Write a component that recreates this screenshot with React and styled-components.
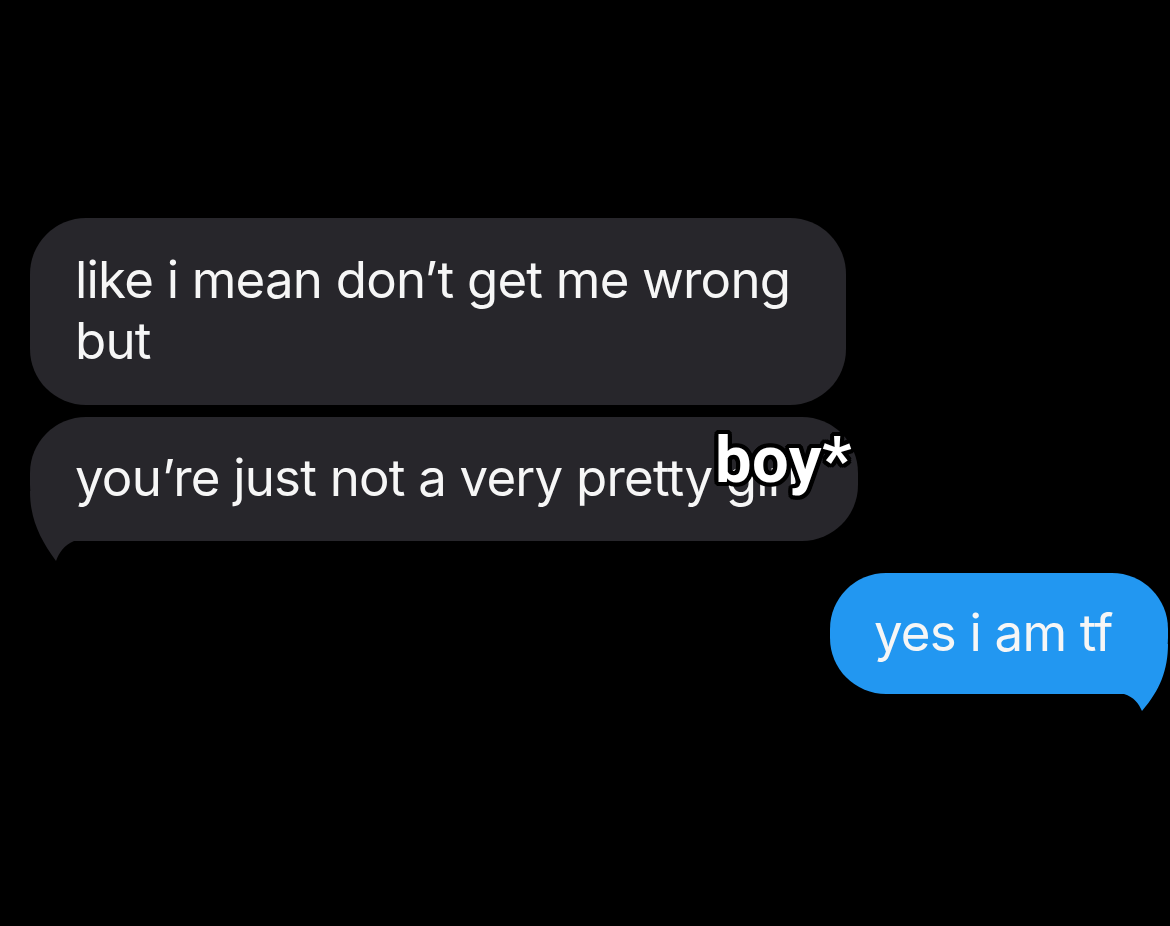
import React from "react";
import styled, { createGlobalStyle } from "styled-components";

const Global = createGlobalStyle`
  html, body { margin: 0; padding: 0; background: #000; }
  body { font-family: Inter, "Noto Sans", sans-serif; }
`;

const Screen = styled.main`
  width: 1170px;
  height: 926px;
  background: #000;
  display: flex;
  flex-direction: column;
  padding-top: 218px;
  box-sizing: border-box;
  overflow: hidden;
`;

const Row = styled.div`
  display: flex;
  justify-content: ${(p) => (p.$me ? "flex-end" : "flex-start")};
  padding: ${(p) => (p.$me ? "0 2px 0 0" : "0 0 0 30px")};
  margin-top: ${(p) => p.$gap || 0}px;
`;

const Bubble = styled.div`
  position: relative;
  box-sizing: border-box;
  width: ${(p) => p.$w}px;
  padding: ${(p) => p.$pad};
  border-radius: 56px;
  background: ${(p) => (p.$me ? "#2297f1" : "#27262b")};
  color: #f6f6f6;
  font-size: 51px;
  line-height: 61px;
  letter-spacing: -0.8px;
  font-weight: 400;
`;

const Text = styled.span`
  position: relative;
  z-index: 1;
`;

const Tail = styled.svg`
  position: absolute;
  z-index: 0;
  bottom: -22px;
  ${(p) => (p.$me ? "right: 0;" : "left: 0;")}
  width: 80px;
  height: 72px;
  overflow: visible;
`;

/* the outlined correction word laid over the end of the message */
const Correction = styled.span`
  position: absolute;
  z-index: 2;
  left: 685px;
  top: 11px;
  font-family: Roboto, "Liberation Sans", sans-serif;
  font-weight: 700;
  font-size: 65px;
  line-height: 64px;
  letter-spacing: 0.5px;
  color: #fff;
  text-shadow:
    -4px 0 #000, 4px 0 #000, 0 -4px #000, 0 4px #000,
    -3px -3px #000, 3px -3px #000, -3px 3px #000, 3px 3px #000,
    -2px -4px #000, 2px -4px #000, -2px 4px #000, 2px 4px #000,
    -4px -2px #000, 4px -2px #000, -4px 2px #000, 4px 2px #000;
`;

function GreyTail() {
  return (
    <Tail viewBox="0 -50 80 72">
      <path d="M0,-50 C0,-22 10,-2 26,20 C29,12 34,4 44,0 L80,0 L80,-50 Z" fill="#27262b" />
    </Tail>
  );
}

function BlueTail() {
  return (
    <Tail $me viewBox="0 -50 80 72">
      <path d="M80,-50 C80,-24 72,-4 54,17 C51,10 46,3 36,0 L0,0 L0,-50 Z" fill="#2297f1" />
    </Tail>
  );
}

export default function App() {
  return (
    <>
      <Global />
      <Screen>
        <Row>
          <Bubble $w={816} $pad="31px 40px 34px 45px">
            <Text>
              like i mean don’t get me wrong
              <br />
              but
            </Text>
          </Bubble>
        </Row>
        <Row $gap={12}>
          <Bubble $w={828} $pad="30px 40px 33px 45px">
            <Text>you’re just not a very pretty girl</Text>
            <Correction>boy*</Correction>
            <GreyTail />
          </Bubble>
        </Row>
        <Row $me $gap={32}>
          <Bubble $me $w={338} $pad="29px 30px 31px 44px">
            <Text>yes i am tf</Text>
            <BlueTail />
          </Bubble>
        </Row>
      </Screen>
    </>
  );
}
